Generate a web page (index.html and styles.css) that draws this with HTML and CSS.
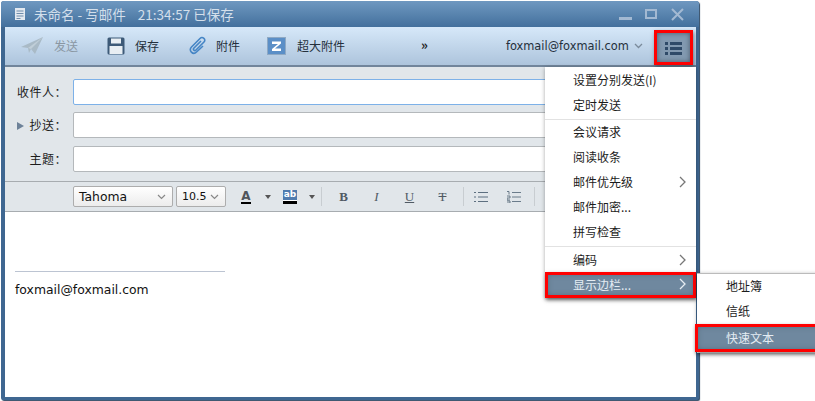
FILE: index.html
```html
<!DOCTYPE html>
<html lang="zh">
<head>
<meta charset="utf-8">
<title>未命名 - 写邮件</title>
<link rel="stylesheet" href="styles.css">
</head>
<body>
<div class="window">
  <div class="titlebar">
    <svg class="doc-ico" width="12" height="14" viewBox="0 0 12 14"><path d="M1 1h10v12H1z" fill="#e3e9f0"/><path d="M2.500 4h7M2.500 6.500h7M2.500 9h7M2.500 11.500h4" stroke="#6f8cab" stroke-width="1"/></svg>
    <span class="title-text">未命名 - 写邮件</span>
    <span class="title-text title-time">21:34:57 已保存</span>
    <div class="winbtns">
      <svg width="13" height="13" viewBox="0 0 13 13"><rect x="0" y="9" width="13" height="3" fill="#a3b9d2"/></svg>
      <svg width="13" height="13" viewBox="0 0 13 13"><rect x="1" y="2" width="10" height="8" fill="none" stroke="#a3b9d2" stroke-width="2"/></svg>
      <svg width="13" height="13" viewBox="0 0 13 13"><path d="M1 1l11 11M12 1L1 12" stroke="#a3b9d2" stroke-width="2"/></svg>
    </div>
  </div>
  <div class="inner">
    <div class="toolbar">
      <div class="tool tool-send">
        <svg width="24" height="20" viewBox="0 0 24 20"><path d="M1 11L23 1 15 18 11 13 9 17 8 12z" fill="#a9bac6"/><path d="M8 12L23 1 11 13" fill="#c0ced8"/></svg>
        <span class="tool-label muted">发送</span>
      </div>
      <div class="tool tool-save">
        <svg width="18" height="18" viewBox="0 0 18 18"><rect x="0.500" y="0.500" width="17" height="17" rx="1.500" fill="#3d5a78"/><rect x="4" y="1.500" width="10" height="5" fill="#e8eef3"/><rect x="2.500" y="9" width="13" height="8" fill="#e8eef3"/></svg>
        <span class="tool-label">保存</span>
      </div>
      <div class="tool tool-attach">
        <svg width="20" height="20" viewBox="0 0 20 20"><path d="M13 5L6 12c-1.500 1.500.5 3.500 2 2l8-8c2.500-2.500-1.500-6-4-3.500L3.500 11c-3.500 3.500 1.500 8.500 5 5L15 10" fill="none" stroke="#4585c5" stroke-width="1.600"/></svg>
        <span class="tool-label">附件</span>
      </div>
      <div class="tool tool-big">
        <svg width="19" height="18" viewBox="0 0 19 18"><rect x="0.500" y="0.500" width="18" height="17" fill="#5b8fc7" stroke="#8fa9c4"/><path d="M5 4.500h9v2L8 11.500h6v2.500H5v-2l6-5H5z" fill="#fff"/></svg>
        <span class="tool-label">超大附件</span>
      </div>
      <span class="more">»</span>
      <span class="account">foxmail@foxmail.com</span>
      <svg class="account-caret" width="9" height="6" viewBox="0 0 9 6"><path d="M1 1l3.500 3.500L8 1" fill="none" stroke="#7b8b9b" stroke-width="1.300"/></svg>
      <div class="menu-btn">
        <svg width="17" height="14" viewBox="0 0 17 14"><path d="M0 1h3v3H0zM5 1h12v3H5zM0 6h3v3H0zM5 6h12v3H5zM0 11h3v3H0zM5 11h12v3H5z" fill="#2f4a68"/></svg>
      </div>
    </div>
    <div class="form">
      <div class="row">
        <label class="lbl">收件人：</label>
        <div class="field field-focus"></div>
      </div>
      <div class="row">
        <label class="lbl"><span class="tri"></span>抄送：</label>
        <div class="field"></div>
      </div>
      <div class="row">
        <label class="lbl">主题：</label>
        <div class="field"></div>
      </div>
    </div>
    <div class="format">
      <div class="select sel-font"><span>Tahoma</span><svg width="9" height="6" viewBox="0 0 9 6"><path d="M1 1l3.500 3.500L8 1" fill="none" stroke="#888" stroke-width="1.200"/></svg></div>
      <div class="select sel-size"><span>10.5</span><svg width="9" height="6" viewBox="0 0 9 6"><path d="M1 1l3.500 3.500L8 1" fill="none" stroke="#888" stroke-width="1.200"/></svg></div>
      <div class="fmt fmt-a"><span class="a-glyph">A</span></div>
      <span class="caret"></span>
      <div class="fmt fmt-ab"><span class="ab-glyph">ab</span></div>
      <span class="caret"></span>
      <span class="sep"></span>
      <span class="fmt-b">B</span>
      <span class="fmt-i">I</span>
      <span class="fmt-u">U</span>
      <span class="fmt-t">T</span>
      <span class="sep sep-list"></span>
      <svg class="list-a" width="14" height="12" viewBox="0 0 14 12"><path d="M0 1.500h2M4 1.500h10M0 6h2M4 6h10M0 10.500h2M4 10.500h10" stroke="#5d6f80"/></svg>
      <svg class="list-b" width="14" height="12" viewBox="0 0 14 12"><path d="M0 .5h2v3M0 5h3v2H0v2h3M0 10h3v2H0M5 1.500h9M5 6h9M5 10.500h9" stroke="#5d6f80" stroke-width=".9" fill="none"/></svg>
      <span class="sep"></span>
    </div>
    <div class="body">
      <div class="sig-line"></div>
      <div class="sig">foxmail@foxmail.com</div>
    </div>
  </div>
</div>

<div class="menu main-menu">
  <div class="item">设置分别发送(I)</div>
  <div class="item">定时发送</div>
  <div class="divider"></div>
  <div class="item">会议请求</div>
  <div class="item">阅读收条</div>
  <div class="item">邮件优先级<svg class="chev" width="7" height="12" viewBox="0 0 7 12"><path d="M1 1l5 5-5 5" fill="none" stroke="#777" stroke-width="1.300"/></svg></div>
  <div class="item">邮件加密...</div>
  <div class="item">拼写检查</div>
  <div class="divider divider-wide"></div>
  <div class="item">编码<svg class="chev" width="7" height="12" viewBox="0 0 7 12"><path d="M1 1l5 5-5 5" fill="none" stroke="#777" stroke-width="1.300"/></svg></div>
  <div class="item item-on">显示边栏...<svg class="chev" width="7" height="12" viewBox="0 0 7 12"><path d="M1 1l5 5-5 5" fill="none" stroke="#e6edf3" stroke-width="1.300"/></svg></div>
</div>
<div class="menu sub-menu">
  <div class="item">地址簿</div>
  <div class="item">信纸</div>
  <div class="item item-on">快速文本</div>
</div>
</body>
</html>
```

FILE: styles.css
```css
* { box-sizing: border-box; }
html, body { margin: 0; padding: 0; background: #fff; overflow: hidden; }
body { width: 815px; height: 401px; position: relative; font-family: "Noto Sans CJK SC", "Noto Sans", sans-serif; font-size: 12px; color: #1c1c1c; }

.window { width: 698px; height: 399px; margin: 1px 0 0 1px; background: #3f6791; border-radius: 3px 3px 2px 2px; display: flex; flex-direction: column; padding: 0 2px 3px 4px; box-shadow: 1px 1px 1px #2c4763; }

.titlebar { height: 26px; flex: none; margin: 0 -2px 0 -4px; padding: 0 15px 0 13px; display: flex; align-items: center; background: linear-gradient(#6f98c0, #43709d); border-radius: 3px 3px 0 0; color: #d3dfeb; font-size: 13.500px; }
.doc-ico { margin-right: 8px; }
.title-time { margin-left: 12px; }
.title-text { line-height: 26px; white-space: nowrap; }
.winbtns { margin-left: auto; display: flex; gap: 13px; }

.inner { flex: 1; display: flex; flex-direction: column; min-height: 0; width: 691px; }

.toolbar { height: 40px; flex: none; display: flex; align-items: center; background: linear-gradient(#d6e8f9, #adc4dc); border-bottom: 2px solid #71859b; padding-left: 15px; position: relative; }
.tool { display: flex; align-items: center; }
.tool-label { line-height: 18px; color: #24303c; }
.muted { color: #8a97a3; }
.tool-send { width: 87px; gap: 10px; }
.tool-save { width: 81px; gap: 10px; }
.tool-attach { width: 79px; gap: 8px; }
.tool-big { gap: 11px; }
.more { margin-left: 76px; font-size: 13px; font-weight: 700; color: #222; line-height: 16px; position: relative; top: -1px; }
.account { margin-left: 78px; font-family: "DejaVu Sans", sans-serif; font-size: 11.400px; color: #24303c; white-space: nowrap; }
.account-caret { margin-left: 5px; }
.menu-btn { position: absolute; left: 649px; top: 3px; width: 39px; height: 35px; border: 3px solid #f00; background: #8299b0; display: flex; align-items: center; justify-content: center; box-shadow: 1px 2px 4px rgba(30, 40, 50, .5), inset 0 0 5px rgba(30, 45, 60, .6); }

.form { height: 115px; flex: none; background: #e1e6ea; border-bottom: 1px solid #a7acb0; padding-top: 12px; display: flex; flex-direction: column; gap: 7px; }
.row { height: 26px; display: flex; align-items: center; }
.row:last-child { height: 26px; margin-top: 1px; }
.lbl { width: 68px; text-align: right; padding-right: 6px; flex: none; color: #1c1c1c; line-height: 26px; letter-spacing: .5px; }
.tri { display: inline-block; width: 0; height: 0; border-left: 7px solid #6d8299; border-top: 4.500px solid transparent; border-bottom: 4.500px solid transparent; margin-right: 5px; }
.field { flex: 1; height: 100%; background: #fff; border: 1px solid #b4b8bb; border-radius: 2px; }
.field-focus { border-color: #7db1e8; }

.format { height: 30px; flex: none; background: #e1e6ea; border-bottom: 1px solid #a7acb0; padding-left: 68px; display: flex; align-items: center; }
.select { height: 21px; border: 1px solid #adadad; border-radius: 2px; background: linear-gradient(#fff, #ececec); display: flex; align-items: center; justify-content: space-between; font-family: "DejaVu Sans", sans-serif; font-size: 12.400px; color: #111; padding: 0 6px 0 5px; }
.sel-font { width: 100px; margin-right: 3px; }
.sel-size { width: 50px; font-size: 11px; }
.fmt { display: flex; }
.fmt-a { margin-left: 15px; }
.a-glyph { width: 10px; text-align: center; font: 700 12px/12px "DejaVu Sans", sans-serif; color: #50565c; border-bottom: 2px solid #000; height: 14px; }
.ab-glyph { width: 14px; height: 14px; font: 700 9px/9px "DejaVu Sans", sans-serif; text-align: center; color: #fff; background: linear-gradient(#4f7bae 10px, #fff 10px, #fff 11px, #000 11px); }
.caret { width: 0; height: 0; border-top: 4px solid #555; border-left: 3.500px solid transparent; border-right: 3.500px solid transparent; margin: 1px 6px 0 12px; }
.fmt-a + .caret { margin: 1px 12px 0 14px; }
.sep { width: 1px; height: 19px; background: #c8cdd1; }
.fmt-b, .fmt-i, .fmt-u, .fmt-t { font-family: "Liberation Serif", serif; font-size: 13px; color: #505a64; width: 33px; text-align: center; line-height: 16px; }
.fmt-b { font-weight: 700; margin-left: 5px; }
.fmt-i { font-style: italic; }
.fmt-u { text-decoration: underline; }
.fmt-t { text-decoration: line-through; }
.sep-list { margin-left: 4px; margin-right: 10px; }
.list-b { margin-left: 19px; margin-right: 13px; }

.body { flex: 1; background: #fff; padding: 59px 0 0 10px; }
.sig-line { width: 210px; height: 1px; background: #bcc4d2; }
.sig { margin-top: 10px; font-family: "DejaVu Sans", sans-serif; font-size: 12.400px; line-height: 16px; color: #111; }

.menu { position: absolute; background: #fff; box-shadow: 0 1px 4px rgba(0, 0, 0, .35); }
.main-menu { left: 545px; top: 67px; width: 151px; height: 231px; padding-top: 1px; }
.sub-menu { left: 697px; top: 273px; width: 130px; height: 80px; border-top: 1px solid #bbb; }
.item { height: 25px; line-height: 24px; padding-left: 28px; position: relative; white-space: nowrap; color: #1c1c1c; }
.divider { height: 2px; border-bottom: 1px solid #e2e2e2; }
.divider-wide { margin-bottom: 1px; }
.chev { position: absolute; right: 10px; top: 6px; }
.item-on { background: #6f889f; color: #e4ecf3; outline: 3px solid #f00; outline-offset: -3px; box-shadow: 1px 2px 4px rgba(0, 0, 0, .5), inset 0 0 7px rgba(30, 45, 60, .7); }
.main-menu .item-on { height: 26px; line-height: 25px; margin-top: -1px; }
.sub-menu .item { padding-left: 29px; }
.sub-menu .item-on { height: 28px; line-height: 27px; margin-left: -2px; padding-left: 31px; }
```
